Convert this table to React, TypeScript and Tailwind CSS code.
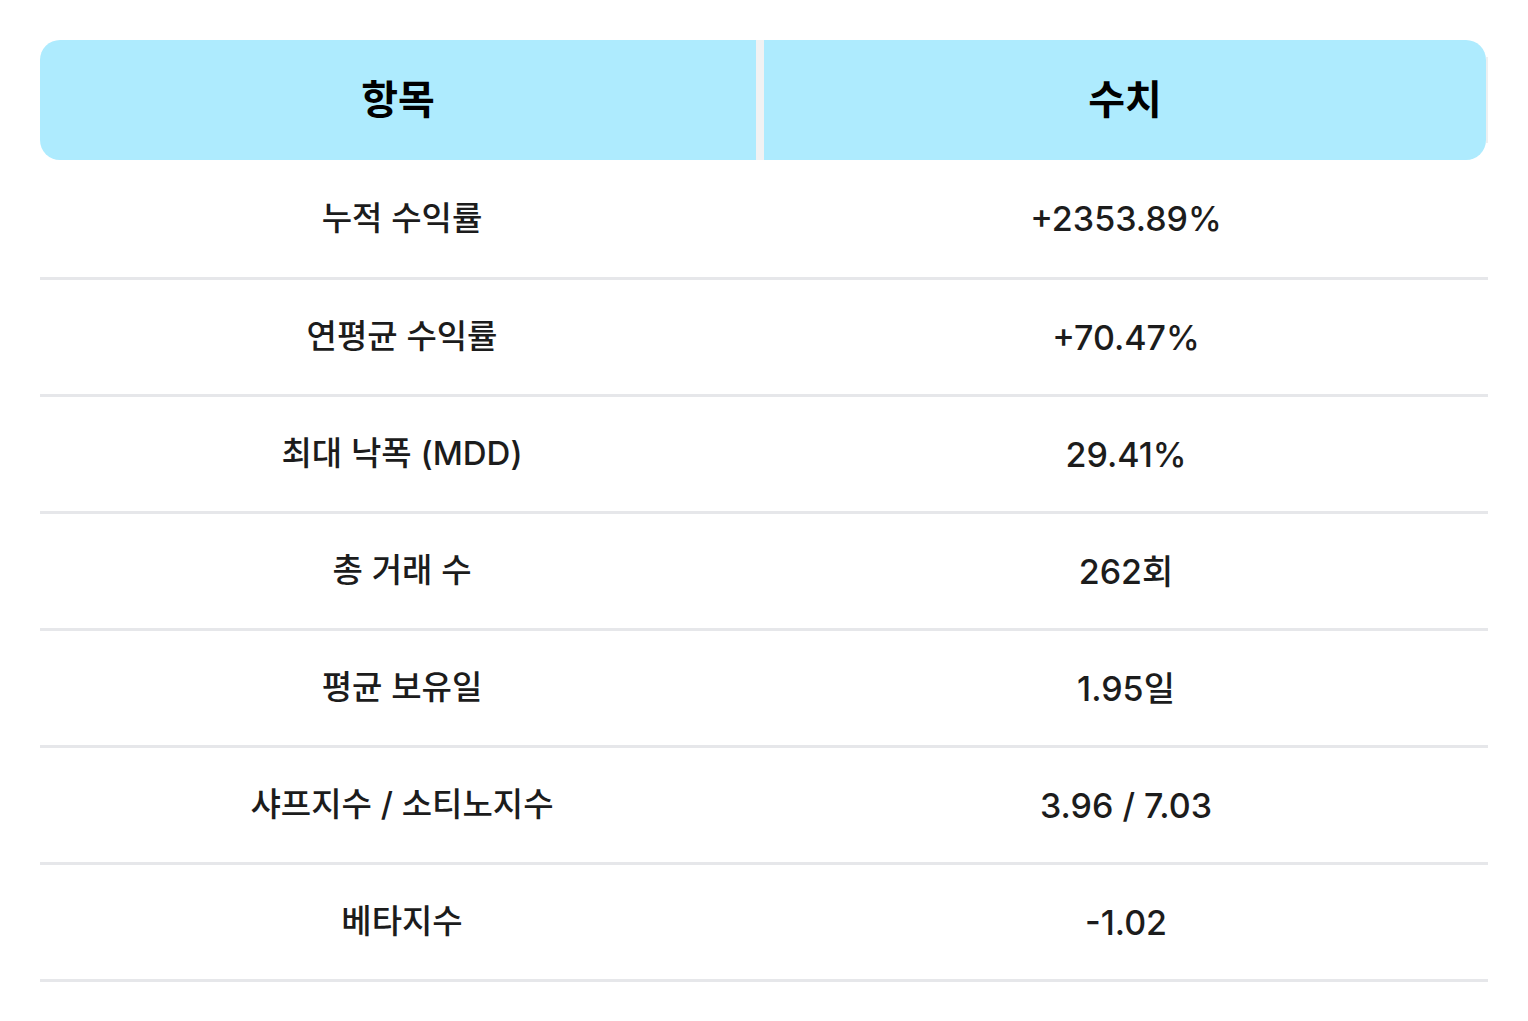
import React from 'react';

interface MetricRow {
  label: string;
  value: string;
}

const rows: MetricRow[] = [
  { label: '누적 수익률', value: '+2353.89%' },
  { label: '연평균 수익률', value: '+70.47%' },
  { label: '최대 낙폭 (MDD)', value: '29.41%' },
  { label: '총 거래 수', value: '262회' },
  { label: '평균 보유일', value: '1.95일' },
  { label: '샤프지수 / 소티노지수', value: '3.96 / 7.03' },
  { label: '베타지수', value: '-1.02' },
];

export default function App() {
  return (
    <div className="min-h-screen bg-white px-10 pt-10 font-['Inter','Noto_Sans_CJK_KR',sans-serif] text-[#1c1c1c]">
      <div className="w-[1448px]">
        {/* 헤더 */}
        <div className="flex h-[120px] text-[40px] font-bold text-black">
          <div className="flex w-[716px] items-center justify-center rounded-l-[20px] bg-[#aeebfe]">
            항목
          </div>
          <div className="w-[8px] bg-[#f1f2f3]" />
          <div className="flex w-[722px] items-center justify-center rounded-r-[20px] bg-[#aeebfe]">
            수치
          </div>
          <div className="my-[17px] w-[2px] bg-[#eef0f1]" />
        </div>

        {/* 본문 */}
        {rows.map((row, index) => (
          <div
            key={row.label}
            className={`${
              index === 0 ? 'h-[120px]' : 'h-[117px]'
            } grid grid-cols-2 border-b-[3px] border-[#e6e7ea] font-medium`}
          >
            <div className="flex items-center justify-center text-[33px]">{row.label}</div>
            <div className="flex items-center justify-center text-[34px]">{row.value}</div>
          </div>
        ))}
      </div>
    </div>
  );
}
